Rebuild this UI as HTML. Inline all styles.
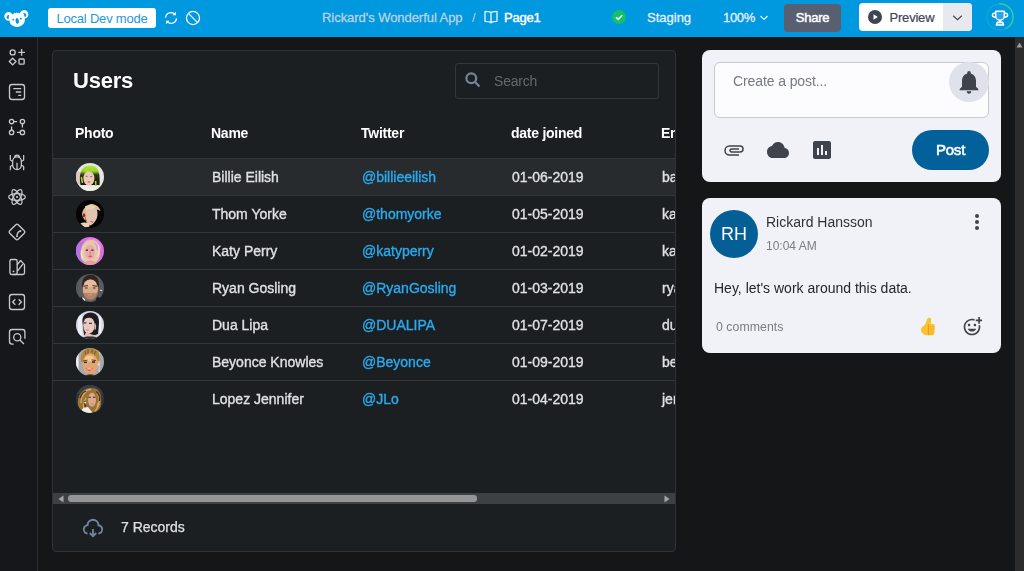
<!DOCTYPE html>
<html lang="en">
<head>
<meta charset="utf-8">
<title>Rickard's Wonderful App - Page1</title>
<style>
*{box-sizing:border-box;margin:0;padding:0}
html,body{width:1024px;height:571px;overflow:hidden;background:#141618;font-family:"Liberation Sans",sans-serif;color:#fff}
.abs{position:absolute}
#top{position:absolute;left:0;top:0;width:1024px;height:37px;background:#0098df}
#side{position:absolute;left:0;top:37px;width:38px;height:534px;background:#15171a;border-right:1px solid #2a2d31}
#side svg{position:absolute;left:7px;width:20px;height:20px}
.t{position:absolute;white-space:nowrap;line-height:1}
#devbtn{position:absolute;left:48px;top:8px;width:108px;height:20px;background:#fff;border-radius:3px;color:#2596de;font-size:13px;letter-spacing:-0.200px;text-align:center;line-height:21.500px}
#share{position:absolute;left:784px;top:4px;width:57px;height:28px;background:#585f70;border-radius:4px;color:#fff;font-size:13px;-webkit-text-stroke:0.450px #fff;letter-spacing:-0.250px;text-align:center;line-height:28px}
#preview{position:absolute;left:859px;top:3px;width:113px;height:28px;background:#fff;border-radius:4px;overflow:hidden}
#preview .dd{position:absolute;left:84px;top:0;width:29px;height:28px;background:#e8e9ef}
#card{will-change:transform;position:absolute;left:52px;top:50px;width:624px;height:502px;background:#1c1f22;border:1px solid #2f3337;border-radius:4px;overflow:hidden}
#search{position:absolute;left:402px;top:12px;width:204px;height:36px;border:1px solid #33373b;border-radius:3px}
.th{position:absolute;top:74px;font-size:14px;letter-spacing:-0.250px;font-weight:bold;color:#fff;white-space:nowrap;line-height:16px}
.row{position:absolute;left:0;width:640px;height:37px;border-top:1px solid #33373b}
.row .c{position:absolute;top:10px;font-size:14px;line-height:16px;color:#dfe0e2;-webkit-text-stroke:0.350px currentColor;white-space:nowrap}
.row .tw{color:#2aaaee}
.av{position:absolute;left:23px;top:4px;width:28px;height:28px;border-radius:50%;overflow:hidden}
#hs{position:absolute;left:0;top:442px;width:622px;height:10.500px;background:#3e4144}
#hs .thumb{position:absolute;left:15px;top:2px;width:409px;height:6.500px;border-radius:3px;background:#939597}
#foot{position:absolute;left:0;top:453px;width:622px;height:46px}
.pc{will-change:transform;position:absolute;left:702px;width:299px;background:#f1f2f8;border-radius:8px;color:#222}
#vs{position:absolute;left:1015px;top:37px;width:9px;height:534px;background:#2c2c2c}
</style>
</head>
<body>
<svg width="0" height="0" style="position:absolute"><defs><linearGradient id="bh" x1="0" y1="0" x2="0" y2="1"><stop offset="0" stop-color="#b6ea3e"/><stop offset="0.300" stop-color="#96d42c"/><stop offset="0.480" stop-color="#2c3612"/><stop offset="1" stop-color="#15170c"/></linearGradient><filter id="bl" x="-20%" y="-20%" width="140%" height="140%"><feGaussianBlur stdDeviation="0.750"/></filter></defs></svg>
<div id="top">
  <svg class="abs" style="left:0;top:0" width="34" height="37" viewBox="0 0 34 37"><g transform="rotate(-7 17 19)"><g fill="#fff"><circle cx="9" cy="15.300" r="4.300"/><circle cx="24.600" cy="15.300" r="4.300"/><ellipse cx="17" cy="20" rx="7.800" ry="7"/><path d="M14.500 13.800l.8-1.500.9 1.200.9-1.400.8 1.400 1-1.100.5 1.600z"/></g><g fill="#0098df"><path d="M7.300 17.600a2.300 2.300 0 0 1 2.600-3.500 4.500 4.500 0 0 0-.9 3.600z"/><path d="M26.300 17.600a2.300 2.300 0 0 0-2.600-3.500 4.500 4.500 0 0 1 .9 3.600z"/><circle cx="13.200" cy="19.200" r="0.900"/><circle cx="20.800" cy="19.200" r="0.900"/><ellipse cx="17" cy="21" rx="1.700" ry="2.900"/></g></g></svg>
  <div id="devbtn">Local Dev mode</div>
  <svg class="abs" style="left:163px;top:10px" width="16" height="16" viewBox="0 0 24 24" fill="none" stroke="#fff" stroke-width="1.900"><path d="M3.800 11.500a8.200 8.200 0 0 1 14.700-4.300M20.200 12.500a8.200 8.200 0 0 1-14.700 4.300"/><path d="M19.300 2.800v5.200h-5.200zM4.700 21.200v-5.200h5.200z" fill="#fff" stroke="none"/></svg>
  <svg class="abs" style="left:185px;top:10px" width="16" height="16" viewBox="0 0 24 24" fill="none" stroke="#fff" stroke-width="1.900"><circle cx="12" cy="12" r="9.800"/><path d="M5.100 5.100l13.800 13.800"/></svg>
  <div class="t" style="left:322px;top:11px;font-size:13px;color:#b9d3e4;-webkit-text-stroke:0.300px #b9d3e4;letter-spacing:-0.050px">Rickard's Wonderful App</div>
  <div class="t" style="left:472px;top:11px;font-size:13px;color:#b9d3e4">/</div>
  <svg class="abs" style="left:483px;top:9px" width="16" height="16" viewBox="0 0 24 24" fill="none" stroke="#fff" stroke-width="1.800" stroke-linejoin="round"><path d="M12 5.500v15.500M12 5.500C10.500 4 8 3.500 3 3.500v15c5 0 7.500.5 9 2.500 1.500-2 4-2.500 9-2.500v-15c-5 0-7.500.5-9 2z"/></svg>
  <div class="t" style="left:504px;top:11px;font-size:13px;color:#fff;-webkit-text-stroke:0.400px #fff;letter-spacing:-0.200px">Page1</div>
  <svg class="abs" style="left:612px;top:10px" width="14" height="14" viewBox="0 0 14 14"><circle cx="7" cy="7" r="7" fill="#15bf6b"/><path d="M4 7.200l2.200 2.200L10.200 5.200" fill="none" stroke="#fff" stroke-width="1.600"/></svg>
  <div class="t" style="left:647px;top:10.500px;font-size:13px;color:#e3f1fa;-webkit-text-stroke:0.300px #e3f1fa">Staging</div>
  <div class="t" style="left:723px;top:10.500px;font-size:13px;color:#e3f1fa;-webkit-text-stroke:0.300px #e3f1fa;letter-spacing:-0.300px">100%</div>
  <svg class="abs" style="left:758.500px;top:13.500px" width="10" height="8" viewBox="0 0 10 8" fill="none" stroke="#e6f3fb" stroke-width="1.200"><path d="M1.500 2l3.500 3.500L8.500 2"/></svg>
  <div id="share">Share</div>
  <div id="preview"><div class="dd"></div>
    <svg class="abs" style="left:9px;top:7px" width="14" height="14" viewBox="0 0 14 14"><circle cx="7" cy="7" r="7" fill="#3f4454"/><path d="M5.500 4.200v5.600l4.300-2.800z" fill="#fff"/></svg>
    <div class="t" style="left:30.500px;top:7.500px;font-size:13px;color:#3f4454;letter-spacing:-0.200px;-webkit-text-stroke:0.200px #3f4454">Preview</div>
    <svg class="abs" style="left:93px;top:10.500px" width="11" height="8" viewBox="0 0 11 8" fill="none" stroke="#3f4454" stroke-width="1.150"><path d="M1.200 1.800l4.300 3.900 4.300-3.900"/></svg>
  </div>
  <svg class="abs" style="left:985.200px;top:1.700px" width="30" height="30" viewBox="0 0 30 30" fill="none"><circle cx="15" cy="15" r="13.200" stroke="#11a9d6" stroke-width="1.200"/><path d="M14 1.840A13.200 13.200 0 0 1 20.600 26.950" stroke="#2bd29a" stroke-width="1.400"/><g stroke="#fff" stroke-width="1.500" stroke-linejoin="round"><path d="M10.700 9.300h8.600v4.600a4.300 4.300 0 0 1-8.600 0z" fill="#2ba5e5"/><path d="M10.700 11.200H9.300a1.700 1.700 0 0 0 0 3.700h1.600M19.300 11.200h1.400a1.700 1.700 0 0 1 0 3.700h-1.600M15 18v2.300"/><path d="M11.300 23l1-2.700h5.400l1 2.700z" fill="#63bdec"/></g></svg>
</div>

<div id="side">
  <svg style="top:10px" viewBox="0 0 24 24" fill="none" stroke="#c6c9cd" stroke-width="1.600"><circle cx="6.800" cy="6.500" r="3"/><path d="M17.500 2.500v8M13.500 6.500h8M6.800 13.500l4 4-4 4-4-4z"/><rect x="14.400" y="14.400" width="6.200" height="6.200" rx="1"/></svg>
  <svg style="top:45px" viewBox="0 0 24 24" fill="none" stroke="#c6c9cd" stroke-width="1.600"><rect x="3" y="3" width="18" height="18" rx="3"/><path d="M7.500 8h9.500M10.500 12h6.500M13.500 16h3.500"/></svg>
  <svg style="top:80px" viewBox="0 0 24 24" fill="none" stroke="#c6c9cd" stroke-width="1.600"><circle cx="5.500" cy="5.500" r="2.600"/><circle cx="18.500" cy="5.500" r="2.600"/><circle cx="5.500" cy="18.500" r="2.600"/><circle cx="18.500" cy="18.500" r="2.600"/><path d="M8.100 5.500h4M18.500 8.100v4.500M5.500 15.900v-4.500M15.900 18.500h-4"/></svg>
  <svg style="top:115px" viewBox="0 0 24 24" fill="none" stroke="#c6c9cd" stroke-width="1.500"><path d="M6.800 11a5.200 5.200 0 0 1 10.400 0v5a5.200 5.200 0 0 1-10.400 0zM9 6.800a3 3 0 0 1 6 0M12 13v7.500M6.800 11.500L4 9.500V3.500M17.200 11.500L20 9.500V3.500M6.800 15.500L4 17.500V22M17.200 15.500L20 17.500V22"/></svg>
  <svg style="top:150px" viewBox="0 0 24 24" fill="none" stroke="#c6c9cd" stroke-width="1.500"><ellipse cx="12" cy="12" rx="10" ry="4"/><ellipse cx="12" cy="12" rx="10" ry="4" transform="rotate(60 12 12)"/><ellipse cx="12" cy="12" rx="10" ry="4" transform="rotate(120 12 12)"/><circle cx="12" cy="12" r="1.300" fill="#c6c9cd" stroke="none"/></svg>
  <svg style="top:185px" viewBox="0 0 24 24" fill="none" stroke="#c6c9cd" stroke-width="1.600"><rect x="4.800" y="4.800" width="14.400" height="14.400" rx="2" transform="rotate(45 12 12)"/><path d="M12 17c0-3 1.500-5.500 4-6.200"/><circle cx="12" cy="17.200" r="1.100" fill="#c6c9cd" stroke="none"/><circle cx="16.200" cy="10.700" r="1.100" fill="#c6c9cd" stroke="none"/></svg>
  <svg style="top:220px" viewBox="0 0 24 24" fill="none" stroke="#c6c9cd" stroke-width="1.600" stroke-linejoin="round"><rect x="3.500" y="3" width="8.700" height="18" rx="2"/><path d="M12.200 9.500L16.300 4.200 21 9.200V19a2 2 0 0 1-2 2H8M12.500 17L19 8.500"/><circle cx="7.800" cy="17.300" r="1.100" fill="#c6c9cd" stroke="none"/></svg>
  <svg style="top:255px" viewBox="0 0 24 24" fill="none" stroke="#c6c9cd" stroke-width="1.600"><rect x="3" y="3" width="18" height="18" rx="3"/><path d="M10 8.800L6.800 12l3.200 3.200M14 8.800l3.200 3.200-3.200 3.200"/></svg>
  <svg style="top:290px" viewBox="0 0 24 24" fill="none" stroke="#c6c9cd" stroke-width="1.600"><path d="M8 20.500H6a3 3 0 0 1-3-3V6a3 3 0 0 1 3-3h12.500a3 3 0 0 1 3 3v8"/><circle cx="12.300" cy="12.300" r="4.300"/><path d="M15.500 15.500l4.800 4.800"/></svg>
</div>

<div id="card">
  <div class="t" style="left:20px;top:19px;font-size:22px;font-weight:bold;color:#fff;letter-spacing:-0.200px">Users</div>
  <div id="search">
    <svg class="abs" style="left:8px;top:7.300px" width="18" height="18" viewBox="0 0 18 18" fill="none" stroke="#77839a" stroke-width="2.200"><circle cx="7.300" cy="7.300" r="4.900"/><path d="M10.800 10.800l4.700 4.700"/></svg>
    <div class="t" style="left:38px;top:10.300px;font-size:14px;color:#64696f;letter-spacing:-0.200px">Search</div>
  </div>
  <div class="th" style="left:22px">Photo</div>
  <div class="th" style="left:158px">Name</div>
  <div class="th" style="left:308px">Twitter</div>
  <div class="th" style="left:458px">date joined</div>
  <div class="th" style="left:608px">Email</div>

  <div class="row" style="top:107px;background:#272b2e"><div class="av"><svg width="28" height="28" viewBox="0 0 28 28"><rect width="28" height="28" fill="#e9e5e0"/><g filter="url(#bl)"><path d="M0 9h5v12H0z" fill="#dcc8bc"/><path d="M4.500 22C3 14 4 6 9 3.500c3-1.500 7-1.500 10 0 4.500 2.500 5 10.500 4.500 18.500z" fill="url(#bh)"/><path d="M5.300 14l1.200 6M19.600 18l.3 5" stroke="#b4cf3c" stroke-width="1.500" fill="none"/><ellipse cx="12.900" cy="15.400" rx="5.500" ry="7.200" fill="#edc9b8"/><path d="M8.500 9.500c1-3 3-4.500 5-4.500-1 1.500-1.500 3-1.500 4z" fill="#a4de3a"/><path d="M3.500 28c.5-3.500 3-5.500 6-6l3.500 2.500 5-2c3 .5 5.500 2.500 6 5.500z" fill="#f1eee6"/><path d="M9.800 13.300h1.800M14.300 13.600h1.800" stroke="#6a5a58" stroke-width="0.900"/><ellipse cx="12.900" cy="19" rx="1.700" ry="0.900" fill="#d98a88"/></g></svg></div><div class="c" style="left:159px">Billie Eilish</div><div class="c tw" style="left:309px">@billieeilish</div><div class="c" style="left:459px">01-06-2019</div><div class="c" style="left:609px">bad@guy.com</div></div>
  <div class="row" style="top:144px"><div class="av"><svg width="28" height="28" viewBox="0 0 28 28"><rect width="28" height="28" fill="#060404"/><g filter="url(#bl)"><path d="M6 15c0-5 4-10 9-11 4 0 8 2 9.500 7l-3-1.500-1 1.500-9 3-3 6z" fill="#d9bf98"/><path d="M9 6.500c3-2 8-2 11 0l-3 2.500-7 1z" fill="#e4d2b4"/><path d="M10.500 11c3-2.500 8-3 10.500-.5 1 3 .5 6.500-1 9.500-1.500 2.500-3.500 5-6 5.500-2.500-1-4-4-4.500-7.500-.3-2.500 0-5 1-7z" fill="#e2c4b0"/><path d="M10.500 12c-.8 3-.6 7 1 10.500l2.500 3c-2.500-1-4.500-4-5-7.500z" fill="#c48a68"/><ellipse cx="8" cy="15.300" rx="1.300" ry="2" fill="#a81c1c"/><path d="M14.500 21.500l2.500.7" stroke="#c0504a" stroke-width="1"/><path d="M4.500 23.500c2-1.200 6-1.200 8.500-.3l.5 3.500-5 .8z" fill="#ead2ba"/></g></svg></div><div class="c" style="left:159px">Thom Yorke</div><div class="c tw" style="left:309px">@thomyorke</div><div class="c" style="left:459px">01-05-2019</div><div class="c" style="left:609px">karma@police.com</div></div>
  <div class="row" style="top:181px"><div class="av"><svg width="28" height="28" viewBox="0 0 28 28"><rect width="28" height="28" fill="#dd6fe0"/><g filter="url(#bl)"><path d="M0 5h8v20H0z" fill="#b873e2"/><circle cx="16" cy="10" r="9" fill="#ea86e6"/><path d="M5 21C3.500 12 6.500 3.500 14.500 3S25 10 23.500 19c-.5 3-2 5-3 6h-12c-1.500-1-3-2-3.500-4z" fill="#e7c9a6"/><path d="M6 13c-1 3-.5 6 1 9M21.500 8c2 3 2 8 0 12" stroke="#f4e4cc" stroke-width="1.400" fill="none"/><path d="M18.500 6c2 1 3 4 3 7" stroke="#c8a0e0" stroke-width="1.600" fill="none"/><ellipse cx="14" cy="15" rx="5" ry="7.300" fill="#e9aaaa"/><path d="M7 28c.5-3 3-4.500 7-4.500s6.500 1.500 7 4.500z" fill="#e3a0a4"/><path d="M9.800 13.200h2.200M15.300 13.200h2.200" stroke="#3c1c30" stroke-width="1.200"/><path d="M14.300 14v3.500" stroke="#c07890" stroke-width="0.800"/><ellipse cx="14.300" cy="19.400" rx="1.800" ry="0.800" fill="#e0487c"/></g></svg></div><div class="c" style="left:159px">Katy Perry</div><div class="c tw" style="left:309px">@katyperry</div><div class="c" style="left:459px">01-02-2019</div><div class="c" style="left:609px">katy@perry.com</div></div>
  <div class="row" style="top:218px"><div class="av"><svg width="28" height="28" viewBox="0 0 28 28"><rect width="28" height="28" fill="#5a5a63"/><g filter="url(#bl)"><path d="M6.300 13C5 5.500 9 .8 14.500.8S24 5.500 22.700 13z" fill="#33261e"/><ellipse cx="14.400" cy="15.500" rx="7.600" ry="10.300" fill="#dcab8c"/><ellipse cx="14.300" cy="9.500" rx="6" ry="3.600" fill="#e6bc9e"/><path d="M6.900 17c.5 7 3.500 9.800 7.500 9.800s7-2.800 7.500-9.800c-1.500 3-3.500 2.500-4.500 2h-7.400c-1-.3-3 1-4.500-2z" fill="#9a7054" opacity="0.650"/><path d="M7.500 12.300l4.500-.8M16.500 11.500l4.500.8" stroke="#4a3224" stroke-width="1"/><path d="M9 14h2.500M17 14h2.500" stroke="#33302e" stroke-width="1.100"/><ellipse cx="14.300" cy="20.600" rx="2.200" ry="0.900" fill="#d8908a"/><path d="M0 28c1-3 4-4.500 7-5l2 5zM28 28c-1-3-4-4.500-7-5l-2 5z" fill="#17171c"/><path d="M6.500 23.500l2.500 3" stroke="#e4eef0" stroke-width="1.300"/><rect x="24" y="15.800" width="2.200" height="1" fill="#efe4d0"/></g></svg></div><div class="c" style="left:159px">Ryan Gosling</div><div class="c tw" style="left:309px">@RyanGosling</div><div class="c" style="left:459px">01-03-2019</div><div class="c" style="left:609px">ryan@gosling.com</div></div>
  <div class="row" style="top:255px"><div class="av"><svg width="28" height="28" viewBox="0 0 28 28"><rect width="28" height="28" fill="#d9d9e8"/><g filter="url(#bl)"><path d="M2 4h4v22H2zM22 6h3v16h-3z" fill="#eeeef6"/><path d="M6.500 11C6 5 9.500 1.500 14.500 1.500S23.500 5 23 12c-.3 4-.5 8-1 11l-4 1.500-9.500-.5c-1-2-1.500-8-2-13z" fill="#1b1a20"/><path d="M8 24l2-4v5z" fill="#1b1a20"/><ellipse cx="12.900" cy="14.300" rx="5.700" ry="8.500" fill="#e9c9c1"/><path d="M7 9c1.500-4 7.500-5.500 11.500-2.500 1.500 2 2 4 2.500 6-2-3-4-5-6-5.500-3-.5-6 0-8 2z" fill="#1b1a20"/><path d="M18.500 12.500c1 1.500 1.200 4 .5 6" stroke="#ddb5ac" stroke-width="1.500" fill="none"/><path d="M11 20c1 2 4 4 9 4l3 4H8c0-3 1-6 3-8z" fill="#e3bfb6"/><path d="M5 28c2-2 5-2.500 9-2.500s7 .5 9 2.500z" fill="#2a2a32"/><path d="M7.800 11.800h2.600M13 12.300h3" stroke="#4a3a40" stroke-width="1.300"/><ellipse cx="11.500" cy="19" rx="1.700" ry="0.800" fill="#d98688"/></g></svg></div><div class="c" style="left:159px">Dua Lipa</div><div class="c tw" style="left:309px">@DUALIPA</div><div class="c" style="left:459px">01-07-2019</div><div class="c" style="left:609px">dua@lipa.com</div></div>
  <div class="row" style="top:292px"><div class="av"><svg width="28" height="28" viewBox="0 0 28 28"><rect width="28" height="28" fill="#a9a9ad"/><g filter="url(#bl)"><rect x="0" y="5" width="2.500" height="20" fill="#f4f4f4"/><rect x="22.500" y="4" width="1.500" height="20" fill="#c8c8cc"/><path d="M5 14C3.500 6 8 .3 14.500.3S25 5 23.500 13z" fill="#b5863f"/><path d="M12 1v6M16 1v6M9 3l1.500 5M19.500 3l-1.500 5" stroke="#7a5420" stroke-width="0.900"/><ellipse cx="14.300" cy="16" rx="7.700" ry="10.700" fill="#e2a673"/><ellipse cx="13.500" cy="10.500" rx="4.500" ry="3" fill="#f3c795"/><path d="M7 13l4.500-.8M15.500 11.800l4.500.8" stroke="#5a3a1c" stroke-width="0.900"/><path d="M8 14.300h2.800M16 14h3" stroke="#2c2420" stroke-width="1.300"/><path d="M10.300 20.300c2 .8 4.500.6 6.300-.5-.5 2.200-2 3-3.500 3s-2.500-1-2.800-2.500z" fill="#e0202c"/><path d="M11.200 21h4.500" stroke="#fff" stroke-width="1"/><circle cx="22.500" cy="16.300" r="0.800" fill="#fff"/><path d="M8 28c2-2 10-2 13 0z" fill="#1d1a18"/></g></svg></div><div class="c" style="left:159px">Beyonce Knowles</div><div class="c tw" style="left:309px">@Beyonce</div><div class="c" style="left:459px">01-09-2019</div><div class="c" style="left:609px">beyonce@knowles.com</div></div>
  <div class="row" style="top:329px"><div class="av"><svg width="28" height="28" viewBox="0 0 28 28"><rect width="28" height="28" fill="#33333b"/><g filter="url(#bl)"><rect width="28" height="9" fill="#3c3c44"/><path d="M2 20C1 12 5 3.500 14.500 3S26 10 25 19c-.5 4-2.500 7-5 8.500H8c-3-1.500-5.500-4.500-6-7.500z" fill="#9a7236"/><path d="M5 18c0-5 2-9 5-11M8 24c-1-3 0-8 2-11M22 22c2-4 1.500-10-1-14M19 26c2-2 3-5 3-8M7 9c2-3 5-4.500 8-4.500" stroke="#d6ae6c" stroke-width="1.300" fill="none"/><path d="M4 13c1-3 3-6 6-7M23.500 16c.5-3-.5-7-3-9.500M11 24c-2-2-2.500-5-2-8" stroke="#4a3016" stroke-width="1.300" fill="none"/><ellipse cx="16" cy="14.800" rx="4" ry="7" fill="#dbaa8a"/><path d="M12.300 12.300h2.500M17 12.300h2.500" stroke="#3a2620" stroke-width="1.100"/><ellipse cx="16.500" cy="19" rx="1.600" ry="0.800" fill="#d88480"/><circle cx="9.300" cy="17.600" r="0.900" fill="#fff"/><path d="M5.500 25c1-2 3.500-3 6.500-3l4.500 5.500-2 .5H8z" fill="#efeeea"/></g></svg></div><div class="c" style="left:159px">Lopez Jennifer</div><div class="c tw" style="left:309px">@JLo</div><div class="c" style="left:459px">01-04-2019</div><div class="c" style="left:609px">jennifer@lopez.com</div></div>

  <div id="hs"><div class="thumb"></div>
    <svg class="abs" style="left:5px;top:1.500px" width="6" height="8" viewBox="0 0 6 8"><path d="M5.500 0.500v7L0.500 4z" fill="#a3a5a8"/></svg>
    <svg class="abs" style="left:611px;top:1.500px" width="6" height="8" viewBox="0 0 6 8"><path d="M0.500 0.500v7L5.500 4z" fill="#a3a5a8"/></svg>
  </div>
  <div id="foot">
    <svg class="abs" style="left:29px;top:13px" width="22" height="22" viewBox="0 0 24 24" fill="#75839a"><path d="M13 13v5.585l1.828-1.828 1.415 1.415L12 22.414l-4.243-4.242 1.415-1.415L11 18.585V13h2zM12 2a7.001 7.001 0 0 1 6.954 6.194 5.500 5.500 0 0 1-.953 10.784v-2.014a3.500 3.500 0 1 0-1.112-6.910 5 5 0 1 0-9.777 0 3.500 3.500 0 0 0-1.292 6.880l.18.030v2.014a5.500 5.500 0 0 1-.954-10.784A7 7 0 0 1 12 2z"/></svg>
    <div class="t" style="left:68px;top:16px;font-size:14px;color:#dfe0e2;-webkit-text-stroke:0.250px #dfe0e2">7 Records</div>
  </div>
</div>

<div class="pc" style="top:50px;height:132px">
  <div class="abs" style="left:12px;top:12px;width:275px;height:56px;border:1px solid #c6c9d0;border-radius:6px;background:#fcfcfe"></div>
  <div class="t" style="left:31px;top:24px;font-size:14px;color:#757980;letter-spacing:-0.100px">Create a post...</div>
  <div class="abs" style="left:247px;top:12px;width:40px;height:40px;border-radius:50%;background:#dfe2ea"></div>
  <svg class="abs" style="left:253px;top:18px" width="28" height="28" viewBox="0 0 24 24" fill="#3f434b"><path d="M12 22c1.100 0 2-.9 2-2h-4c0 1.100.89 2 2 2zm6-6v-5c0-3.070-1.640-5.640-4.500-6.320V4c0-.83-.67-1.500-1.500-1.500s-1.500.67-1.500 1.500v.68C7.630 5.360 6 7.920 6 11v5l-2 2v1h16v-1l-2-2z"/></svg>
  <svg class="abs" style="left:20px;top:88px" width="24" height="24" viewBox="0 0 24 24" fill="none" stroke="#3f434b" stroke-width="1.500"><path d="M17 11H9.500a1.500 1.500 0 0 0 0 3H18a3 3 0 0 0 0-6H7.500a4.500 4.500 0 0 0 0 9H17"/></svg>
  <svg class="abs" style="left:65px;top:88px" width="22" height="24" viewBox="0 0 24 24" preserveAspectRatio="none" fill="#3f434b"><path d="M19.350 10.040C18.670 6.590 15.640 4 12 4 9.110 4 6.600 5.640 5.350 8.040 2.340 8.360 0 10.910 0 14c0 3.310 2.690 6 6 6h13c2.760 0 5-2.240 5-5 0-2.640-2.050-4.780-4.650-4.960z"/></svg>
  <svg class="abs" style="left:108px;top:88px" width="24" height="24" viewBox="0 0 24 24" fill="#3f434b"><path d="M19 3H5c-1.100 0-2 .9-2 2v14c0 1.100.9 2 2 2h14c1.100 0 2-.9 2-2V5c0-1.100-.9-2-2-2zM9 17H7v-7h2v7zm4 0h-2V7h2v10zm4 0h-2v-4h2v4z"/></svg>
  <div class="abs" style="left:210px;top:80px;width:77px;height:40px;border-radius:20px;background:#02609a;color:#fff;font-size:15px;-webkit-text-stroke:0.550px #fff;letter-spacing:-0.200px;text-align:center;line-height:40px">Post</div>
</div>

<div class="pc" style="top:198px;height:155px">
  <div class="abs" style="left:8px;top:12px;width:48px;height:48px;border-radius:50%;background:#045f97;color:#fff;font-size:18px;text-align:center;line-height:48px">RH</div>
  <div class="t" style="left:64px;top:17px;font-size:14px;color:#2e3036">Rickard Hansson</div>
  <div class="t" style="left:64px;top:42px;font-size:12px;color:#7a7d84">10:04 AM</div>
  <div class="t" style="left:12px;top:83px;font-size:14px;color:#24262b">Hey, let's work around this data.</div>
  <div class="t" style="left:14px;top:123px;font-size:12.300px;color:#7a7d84;letter-spacing:0.050px">0 comments</div>
  <svg class="abs" style="left:263px;top:12px" width="24" height="24" viewBox="0 0 24 24" fill="#3f434b"><circle cx="12" cy="6" r="2"/><circle cx="12" cy="12" r="2"/><circle cx="12" cy="18" r="2"/></svg>
  <svg class="abs" style="left:218px;top:119.100px" width="15.600" height="19" viewBox="205 175 160 195"><path d="M300 182C312 182 322 192 320 205L314 245L338 245C350 245 358 254 356 264C355 270 352 273 352 273C358 278 358 290 352 297C358 303 357 315 351 321C356 328 354 340 347 344C350 355 343 363 333 363L285 363C260 363 240 352 228 338C212 322 210 300 222 285C232 272 248 265 257 252C265 238 272 215 278 198C281 188 290 182 300 182Z" fill="#fbc130"/><path d="M291 250V362" stroke="#e8961a" stroke-width="9"/><path d="M297 273h56M297 298h58M297 322h55M297 345h48" stroke="#eda91f" stroke-width="6"/></svg>
  <svg class="abs" style="left:260px;top:119px" width="20" height="20" viewBox="0 0 24 24" fill="#3f434b"><path d="M7 9.500C7 8.670 7.670 8 8.500 8s1.500.67 1.500 1.500S9.330 11 8.500 11 7 10.330 7 9.500zm5 8c2.330 0 4.310-1.460 5.110-3.500H6.890c.8 2.040 2.780 3.500 5.110 3.500zM15.500 11c.83 0 1.500-.67 1.500-1.500S16.330 8 15.500 8 14 8.670 14 9.500s.67 1.500 1.500 1.500zM21.500 0h-2v3h-3v2h3v3h2V5h3V3h-3V0zM20 12c0 4.420-3.580 8-8 8s-8-3.580-8-8 3.580-8 8-8c1.100 0 2.100.2 3 .6V2.500C14.100 2.200 13.100 2 11.990 2 6.470 2 2 6.480 2 12s4.470 10 9.990 10C17.520 22 22 17.520 22 12c0-.7-.1-1.400-.2-2h-2c.1.600.2 1.300.2 2z"/></svg>

</div>

<div id="vs"><svg class="abs" style="left:1px;top:5px" width="7" height="6" viewBox="0 0 7 6"><path d="M3.500 0.500L6.500 5.500H0.500z" fill="#9a9a9a"/></svg></div>
</body>
</html>
